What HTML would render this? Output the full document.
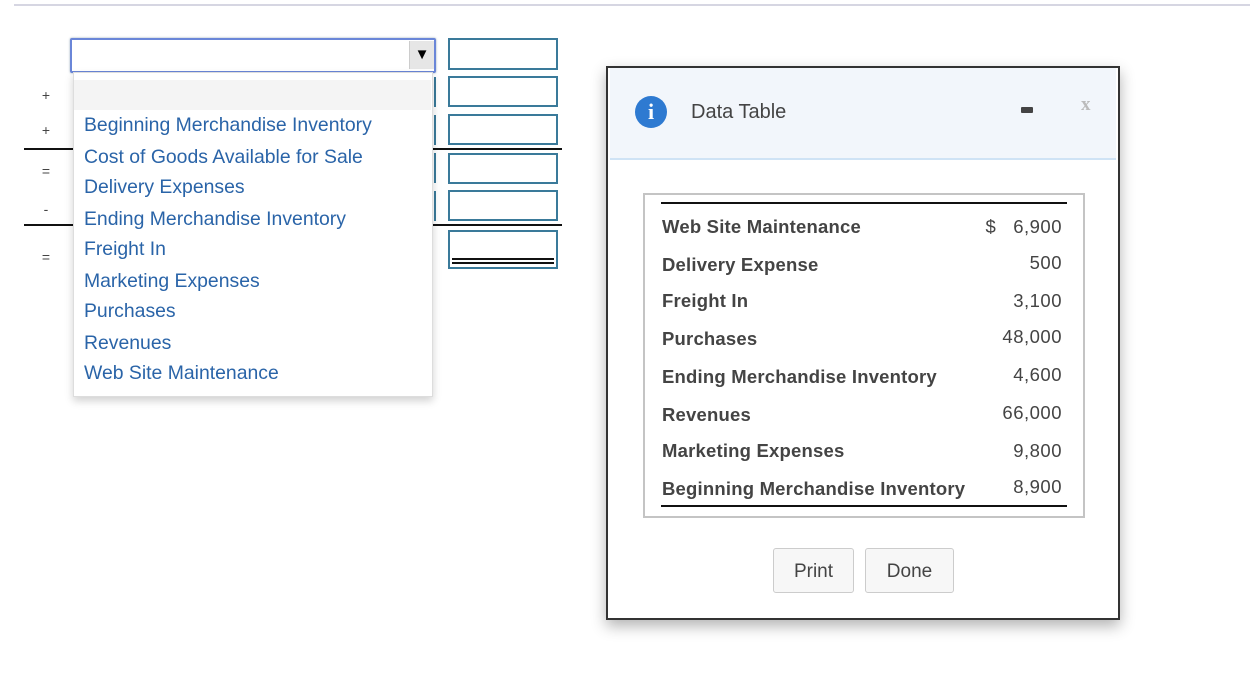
<!DOCTYPE html><html><head><style>
body{margin:0;width:1250px;height:676px;background:#fff;position:relative;overflow:hidden;font-family:"Liberation Sans",Arial,sans-serif}
.a{position:absolute}
.in{position:absolute;left:448px;width:106px;border:2px solid #3a7a9a;background:#fff}
.op{position:absolute;left:84px;font-size:19.4px;color:#2a64a8;line-height:20px}
.sg{position:absolute;left:40px;font-size:14px;color:#444;width:12px;text-align:center}
.r{position:absolute;left:662px;width:400px;font-size:18.5px;color:#444;font-weight:bold;line-height:20px;letter-spacing:0.2px}
.r span{position:absolute;right:0;font-weight:normal;letter-spacing:0.5px}
.btn{position:absolute;top:548px;height:43px;border:1px solid #ccc;border-radius:3px;background:#f7f7f7;font-size:19px;color:#444;text-align:center;line-height:45px}
</style></head><body>
<div class="a" style="left:14px;top:4px;width:1236px;height:2px;background:#d6d6e2"></div>
<div class="sg" style="top:87px">+</div>
<div class="sg" style="top:122px">+</div>
<div class="sg" style="top:163px">=</div>
<div class="sg" style="top:201px">-</div>
<div class="sg" style="top:249px">=</div>
<div class="a" style="left:24px;top:148px;width:538px;height:2px;background:#111"></div>
<div class="a" style="left:24px;top:224px;width:538px;height:2px;background:#111"></div>
<div class="in" style="top:38px;height:28px"></div>
<div class="in" style="top:76px;height:27px"></div>
<div class="in" style="top:114px;height:27px"></div>
<div class="in" style="top:153px;height:27px"></div>
<div class="in" style="top:190px;height:27px"></div>
<div class="in" style="top:230px;height:35px"><div class="a" style="left:2px;right:2px;top:26px;height:2px;background:#111"></div><div class="a" style="left:2px;right:2px;top:30px;height:2px;background:#111"></div></div>
<div class="a" style="left:434px;top:77px;width:2px;height:30px;background:#3a7a9a"></div>
<div class="a" style="left:434px;top:115px;width:2px;height:30px;background:#3a7a9a"></div>
<div class="a" style="left:434px;top:153px;width:2px;height:30px;background:#3a7a9a"></div>
<div class="a" style="left:434px;top:191px;width:2px;height:30px;background:#3a7a9a"></div>
<div class="a" style="left:70px;top:38px;width:362px;height:31px;border:2px solid #6a86d8;border-radius:2px;background:#fff;box-shadow:0 0 2px #9ab"></div>
<div class="a" style="left:409px;top:41px;width:24px;height:28px;background:#e6e6e6;border-left:1px solid #ccc;font-size:15px;text-align:center;line-height:28px;color:#000">▼</div>
<div class="a" style="left:73px;top:72px;width:358px;height:323px;background:#fff;border:1px solid #ddd;box-shadow:0 4px 8px rgba(0,0,0,.18)"></div>
<div class="a" style="left:74px;top:80px;width:357px;height:30px;background:#f4f4f4"></div>
<div class="op" style="top:115px">Beginning Merchandise Inventory</div>
<div class="op" style="top:147px">Cost of Goods Available for Sale</div>
<div class="op" style="top:177px">Delivery Expenses</div>
<div class="op" style="top:209px">Ending Merchandise Inventory</div>
<div class="op" style="top:239px">Freight In</div>
<div class="op" style="top:271px">Marketing Expenses</div>
<div class="op" style="top:301px">Purchases</div>
<div class="op" style="top:333px">Revenues</div>
<div class="op" style="top:363px">Web Site Maintenance</div>
<div class="a" style="left:606px;top:66px;width:510px;height:550px;border:2px solid #333;background:#fff;box-shadow:0 6px 14px rgba(0,0,0,.3)"></div>
<div class="a" style="left:610px;top:68px;width:506px;height:90px;background:#f2f6fb;border-bottom:2px solid #cfe3f5"></div>
<div class="a" style="left:635px;top:96px;width:32px;height:32px;border-radius:50%;background:#2e7ad1;color:#fff;font:bold 22px/32px 'Liberation Serif',serif;text-align:center">i</div>
<div class="a" style="left:691px;top:101px;font-size:20px;color:#444">Data Table</div>
<div class="a" style="left:1021px;top:107px;width:12px;height:6px;background:#444;border-radius:1px"></div>
<div class="a" style="left:1081px;top:94px;font:bold 19px 'Liberation Serif',serif;color:#bbb">x</div>
<div class="a" style="left:643px;top:193px;width:438px;height:321px;border:2px solid #c4c4c4"></div>
<div class="a" style="left:661px;top:202px;width:406px;height:2px;background:#111"></div>
<div class="a" style="left:661px;top:505px;width:406px;height:2px;background:#111"></div>
<div class="r" style="top:217px">Web Site Maintenance<span>$&nbsp;&nbsp; 6,900</span></div>
<div class="r" style="top:255px">Delivery Expense<span style="top:-2px">500</span></div>
<div class="r" style="top:291px">Freight In<span>3,100</span></div>
<div class="r" style="top:329px">Purchases<span style="top:-2px">48,000</span></div>
<div class="r" style="top:367px">Ending Merchandise Inventory<span style="top:-2px">4,600</span></div>
<div class="r" style="top:405px">Revenues<span style="top:-2px">66,000</span></div>
<div class="r" style="top:441px">Marketing Expenses<span>9,800</span></div>
<div class="r" style="top:479px">Beginning Merchandise Inventory<span style="top:-2px">8,900</span></div>
<div class="btn" style="left:773px;width:79px">Print</div>
<div class="btn" style="left:865px;width:87px">Done</div>
</body></html>
